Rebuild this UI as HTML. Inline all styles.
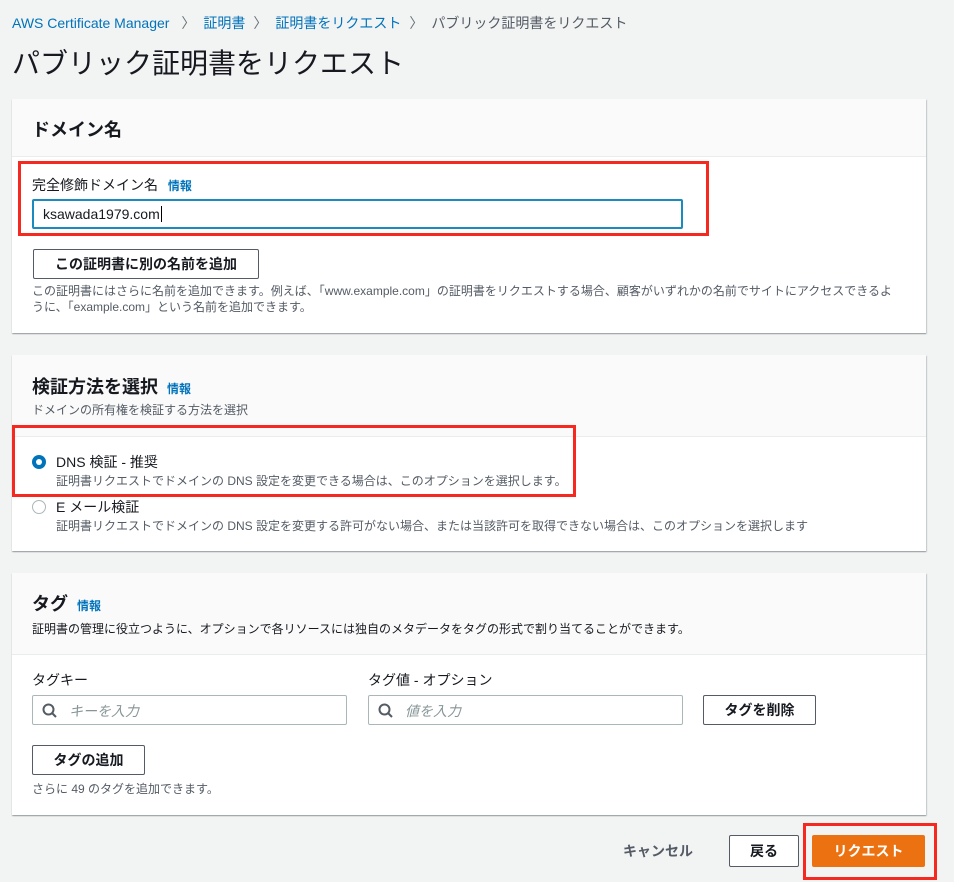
<!DOCTYPE html>
<html><head><meta charset="utf-8"><style>
body{margin:0;width:954px;height:882px;background:#f2f3f3;font-family:"Liberation Sans","Noto Sans CJK JP",sans-serif;color:#16191f;position:relative;overflow:hidden}
.a{position:absolute;white-space:nowrap}
.panel{position:absolute;left:12px;width:914px;background:#fff;box-shadow:0 1px 1px rgba(0,28,36,.3),1px 1px 1px rgba(0,28,36,.15)}
.hd{position:absolute;left:0;top:0;width:100%;background:#fafafa;border-bottom:1px solid #eaeded}
.link{color:#0073bb}
.btn{position:absolute;border:1px solid #545b64;background:#fff;font-weight:bold;font-size:14px;text-align:center;box-sizing:border-box;border-radius:2px}
.red{position:absolute;border:3px solid #f5291f;box-sizing:border-box}
.inp{position:absolute;border:1px solid #aab7b8;background:#fff;box-sizing:border-box;border-radius:2px;font-size:14px;color:#879596;font-style:italic}
.sm{font-size:12px;color:#545b64}
</style></head><body>
<div class="a" style="left:12px;top:13px;font-size:14px"><span class="link">AWS Certificate Manager</span> <span style="color:#687078;margin:0 8px">〉</span><span class="link">証明書</span><span style="color:#687078;margin:0 8px">〉</span><span class="link">証明書をリクエスト</span><span style="color:#687078;margin:0 8px">〉</span><span style="color:#545b64">パブリック証明書をリクエスト</span></div>
<div class="a" style="left:12px;top:42px;font-size:28px">パブリック証明書をリクエスト</div>

<div class="panel" style="top:99px;height:234px">
 <div class="hd" style="height:57px"></div>
 <div class="a" style="left:20px;top:17px;font-size:18px;font-weight:bold">ドメイン名</div>
 <div class="a" style="left:20px;top:76px;font-size:14px">完全修飾ドメイン名 <span class="link" style="font-size:12px;font-weight:bold;margin-left:6px">情報</span></div>
 <div class="a" style="left:20px;top:100px;width:651px;height:30px;border:2px solid #1b8abf;box-sizing:border-box;border-radius:2px;font-size:14px;padding:5px 9px">ksawada1979.com<span style="border-left:1px solid #000;margin-left:1px"></span></div>
 <div class="btn" style="left:21px;top:150px;width:226px;height:30px;line-height:28px">この証明書に別の名前を追加</div>
 <div class="a sm" style="left:20px;top:184px;line-height:16px">この証明書にはさらに名前を追加できます。例えば、「www.example.com」の証明書をリクエストする場合、顧客がいずれかの名前でサイトにアクセスできるよ<br>うに、「example.com」という名前を追加できます。</div>
</div>

<div class="panel" style="top:355px;height:196px">
 <div class="hd" style="height:81px"></div>
 <div class="a" style="left:20px;top:18px;font-size:18px;font-weight:bold">検証方法を選択 <span class="link" style="font-size:12px;margin-left:4px">情報</span></div>
 <div class="a sm" style="left:20px;top:46px">ドメインの所有権を検証する方法を選択</div>
 <div class="a" style="left:20px;top:100px;width:14px;height:14px;border-radius:50%;background:#0073bb"><div style="position:absolute;left:4px;top:4px;width:6px;height:6px;border-radius:50%;background:#fff"></div></div>
 <div class="a" style="left:44px;top:97px;font-size:14px">DNS 検証 - 推奨</div>
 <div class="a sm" style="left:44px;top:117px">証明書リクエストでドメインの DNS 設定を変更できる場合は、このオプションを選択します。</div>
 <div class="a" style="left:20px;top:145px;width:14px;height:14px;border-radius:50%;border:1px solid #aab7b8;box-sizing:border-box"></div>
 <div class="a" style="left:44px;top:142px;font-size:14px">E メール検証</div>
 <div class="a sm" style="left:44px;top:162px">証明書リクエストでドメインの DNS 設定を変更する許可がない場合、または当該許可を取得できない場合は、このオプションを選択します</div>
</div>

<div class="panel" style="top:573px;height:242px">
 <div class="hd" style="height:81px"></div>
 <div class="a" style="left:20px;top:17px;font-size:18px;font-weight:bold">タグ <span class="link" style="font-size:12px;margin-left:4px">情報</span></div>
 <div class="a sm" style="left:20px;top:47px;color:#16191f">証明書の管理に役立つように、オプションで各リソースには独自のメタデータをタグの形式で割り当てることができます。</div>
 <div class="a" style="left:20px;top:97px;font-size:14px">タグキー</div>
 <div class="a" style="left:356px;top:97px;font-size:14px">タグ値 - オプション</div>
 <div class="inp" style="left:20px;top:122px;width:315px;height:30px;padding:5px 0 0 36px">キーを入力</div>
 <div class="inp" style="left:356px;top:122px;width:315px;height:30px;padding:5px 0 0 36px">値を入力</div>
 <svg class="a" style="left:30px;top:130px" width="16" height="16"><circle cx="6.5" cy="6.5" r="5" fill="none" stroke="#545b64" stroke-width="2"/><path d="M10 10l4 4" stroke="#545b64" stroke-width="2"/></svg>
 <svg class="a" style="left:366px;top:130px" width="16" height="16"><circle cx="6.5" cy="6.5" r="5" fill="none" stroke="#545b64" stroke-width="2"/><path d="M10 10l4 4" stroke="#545b64" stroke-width="2"/></svg>
 <div class="btn" style="left:691px;top:122px;width:113px;height:30px;line-height:28px">タグを削除</div>
 <div class="btn" style="left:20px;top:172px;width:113px;height:30px;line-height:28px">タグの追加</div>
 <div class="a sm" style="left:20px;top:207px">さらに 49 のタグを追加できます。</div>
</div>

<div class="a" style="left:623px;top:841px;font-size:14px;font-weight:bold;color:#545b64">キャンセル</div>
<div class="btn" style="left:729px;top:835px;width:70px;height:32px;line-height:30px">戻る</div>
<div class="btn" style="left:812px;top:835px;width:113px;height:32px;line-height:30px;background:#ec7211;border-color:#ec7211;color:#fff">リクエスト</div>

<div class="red" style="left:18px;top:161px;width:691px;height:75px"></div>
<div class="red" style="left:12px;top:425px;width:564px;height:72px"></div>
<div class="red" style="left:803px;top:823px;width:134px;height:57px"></div>
</body></html>
